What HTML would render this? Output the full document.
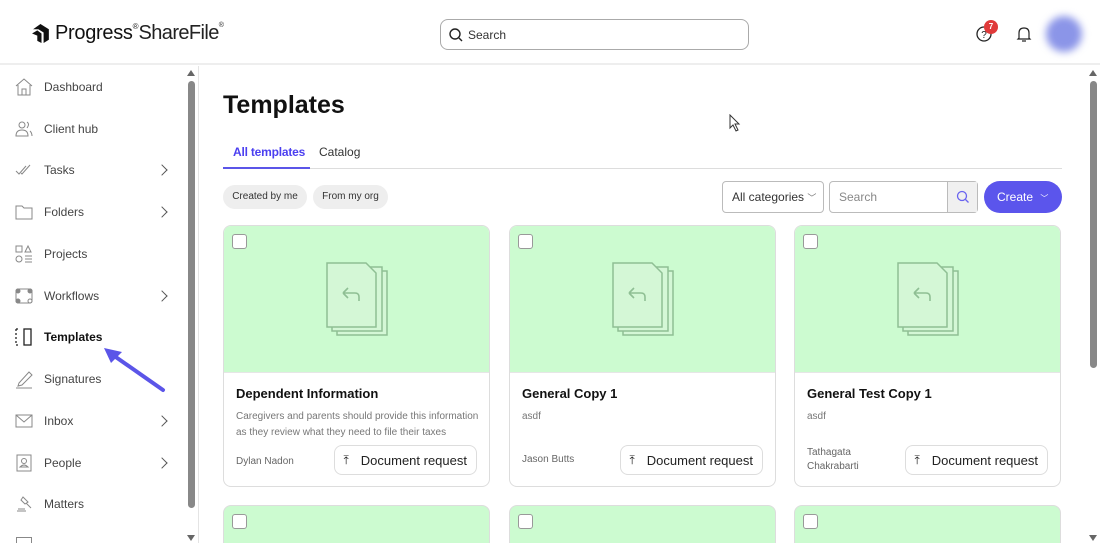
<!DOCTYPE html>
<html style="height:543px;overflow:hidden"><head><meta charset="utf-8"><style>
*{box-sizing:border-box;margin:0;padding:0}
html{width:1100px;height:543px;overflow:hidden}
body{width:1100px;height:543px;overflow:hidden;background:#fff;font-family:"Liberation Sans",sans-serif;color:#222;position:relative}
.abs{position:absolute}
.hdr{left:0;top:0;width:1100px;height:65px;border-bottom:2px solid #eee;background:#fff}
.nav{left:14px;width:170px;height:20px;display:flex;align-items:center;font-size:12px;color:#444}
.nav svg{width:20px;height:20px;margin-right:10px;flex:none}
.nav .ch{position:absolute;right:18px;top:6px;width:8px;height:8px;border-right:1.3px solid #555;border-top:1.3px solid #555;transform:rotate(45deg)}
.card{width:267px;height:262px;border:1px solid #ddd;border-radius:8px;overflow:hidden;background:#fff}
.card .img{height:147px;background:#ccfbd0;position:relative;border-bottom:1px solid #e6e6e6}
.part{height:38px;border-bottom:none;border-radius:8px 8px 0 0;background:#ccfbd0}
.cb{position:absolute;left:8px;top:8px;width:15px;height:15px;border:1px solid #999;border-radius:3px;background:#fff}
.card h3{position:absolute;left:12px;top:160px;font-size:13px;font-weight:bold;color:#111}
.desc{position:absolute;left:12px;top:183px;font-size:10px;color:#777;line-height:16px;width:250px}
.auth{position:absolute;left:12px;font-size:10px;color:#666;line-height:14px}
.btn{position:absolute;right:12px;top:219px;height:30px;border:1px solid #ddd;border-radius:8px;font-size:13px;color:#222;display:flex;align-items:center;padding:0 9px 0 8px}
.btn span{margin-right:12px;font-size:12px}
</style></head><body>
<div class="abs hdr"></div>
<div class="abs" style="left:31px;top:22px;display:flex;align-items:center">
<svg width="21" height="21" viewBox="0 0 20 20"><path d="M2 6 L9 1 L17 6 L17 16 L12 19 L12 9 L7 6 Z" fill="#111"/><path d="M1 10 L6 7 L10 10 L10 19 L6 17 L6 12 Z" fill="#111"/></svg>
<span style="font-size:20px;color:#111;margin-left:3px;letter-spacing:-0.3px">Progress</span><span style="font-size:8px;align-self:flex-start">®</span><span style="font-size:20px;color:#222;letter-spacing:-0.6px">ShareFile</span><span style="font-size:7px;align-self:flex-start">®</span>
</div>
<div class="abs" style="left:440px;top:19px;width:309px;height:31px;border:1px solid #aaa;border-radius:8px;display:flex;align-items:center;padding-left:8px;font-size:12px;color:#333">
<svg width="14" height="14" viewBox="0 0 14 14" style="margin-right:5px"><circle cx="6" cy="6" r="5" fill="none" stroke="#222" stroke-width="1.4"/><path d="M10 10 L13 13" stroke="#222" stroke-width="1.4"/></svg>Search</div>
<svg class="abs" style="left:976px;top:26px" width="16" height="16" viewBox="0 0 16 16"><circle cx="8" cy="8" r="7" fill="none" stroke="#222" stroke-width="1.3"/><text x="8" y="12" font-size="10" text-anchor="middle" font-family="Liberation Sans" fill="#222">?</text></svg>
<div class="abs" style="left:984px;top:20px;width:14px;height:14px;border-radius:50%;background:#e03a3a;color:#fff;font-size:8px;text-align:center;line-height:14px;font-weight:bold">7</div>
<svg class="abs" style="left:1016px;top:26px" width="16" height="17" viewBox="0 0 16 17"><path d="M3 12 L3 7 Q3 2 8 2 Q13 2 13 7 L13 12 L14 13 L2 13 Z" fill="none" stroke="#222" stroke-width="1.2"/><path d="M6 15 L10 15" stroke="#222" stroke-width="1.2"/></svg>
<div class="abs" style="left:1046px;top:16px;width:36px;height:36px;border-radius:50%;background:#8b95e8;filter:blur(4px)"></div>

<div class="abs" style="left:198px;top:66px;width:1px;height:477px;background:#e4e4e4"></div>
<div class="abs" style="left:187px;top:70px;width:0;height:0;border-left:4px solid transparent;border-right:4px solid transparent;border-bottom:6px solid #666"></div>
<div class="abs" style="left:188px;top:81px;width:7px;height:427px;background:#888;border-radius:4px"></div>
<div class="abs" style="left:187px;top:535px;width:0;height:0;border-left:4px solid transparent;border-right:4px solid transparent;border-top:6px solid #666"></div>

<div class="abs nav" style="top:77px"><svg viewBox="0 0 20 20" fill="none" stroke="#888" stroke-width="1"><path d="M2 9 L10 2 L18 9 M4 8 V18 H16 V8 M8 18 V12 H12 V18"/></svg>Dashboard</div>
<div class="abs nav" style="top:119px"><svg viewBox="0 0 20 20" fill="none" stroke="#888" stroke-width="1"><circle cx="8" cy="6" r="3"/><path d="M2 17 Q2 11 8 11 Q14 11 14 17 Z M13 3 Q16 5 13 9 M16 12 Q18 14 18 17"/></svg>Client hub</div>
<div class="abs nav" style="top:160px"><svg viewBox="0 0 20 20" fill="none" stroke="#888" stroke-width="1"><path d="M2 11 L5 14 L12 6 M7 13 L8 14 L16 5"/></svg>Tasks<i class="ch"></i></div>
<div class="abs nav" style="top:202px"><svg viewBox="0 0 20 20" fill="none" stroke="#888" stroke-width="1"><path d="M2 4 H8 L10 6 H18 V17 H2 Z"/></svg>Folders<i class="ch"></i></div>
<div class="abs nav" style="top:244px"><svg viewBox="0 0 20 20" fill="none" stroke="#888" stroke-width="1"><rect x="2" y="2" width="6" height="6"/><path d="M14 2 L17 8 H11 Z M11 12 H18 M11 15 H18 M11 18 H18"/><circle cx="5" cy="15" r="3"/></svg>Projects</div>
<div class="abs nav" style="top:286px"><svg viewBox="0 0 20 20" fill="none" stroke="#888" stroke-width="1"><rect x="2" y="3" width="16" height="14" rx="2"/><circle cx="4" cy="5" r="2" fill="#888"/><circle cx="16" cy="5" r="2" fill="#888"/><circle cx="4" cy="15" r="2" fill="#888"/><circle cx="16" cy="15" r="2"/></svg>Workflows<i class="ch"></i></div>
<div class="abs nav" style="top:327px;color:#111;font-weight:bold"><svg viewBox="0 0 20 20" fill="none" stroke="#222" stroke-width="1.3"><path d="M2 2 H6 M2 18 H6 M2 2 V18" stroke-dasharray="2 2"/><rect x="10" y="2" width="7" height="16"/></svg>Templates</div>
<div class="abs nav" style="top:369px"><svg viewBox="0 0 20 20" fill="none" stroke="#888" stroke-width="1"><path d="M5 14 L15 3 L18 6 L8 16 L4 17 Z M2 19 H18"/></svg>Signatures</div>
<div class="abs nav" style="top:411px"><svg viewBox="0 0 20 20" fill="none" stroke="#888" stroke-width="1"><rect x="2" y="4" width="16" height="12"/><path d="M2 4 L10 11 L18 4"/></svg>Inbox<i class="ch"></i></div>
<div class="abs nav" style="top:453px"><svg viewBox="0 0 20 20" fill="none" stroke="#888" stroke-width="1"><rect x="3" y="2" width="14" height="16"/><circle cx="10" cy="8" r="2.5"/><path d="M6 14 Q10 10 14 14 Z"/></svg>People<i class="ch"></i></div>
<div class="abs nav" style="top:494px"><svg viewBox="0 0 20 20" fill="none" stroke="#888" stroke-width="1"><path d="M9 3 L14 8 L11 10 L7 6 Z M12 9 L17 14 M3 17 H12 M4 15 H11"/></svg>Matters</div>
<div class="abs" style="left:16px;top:537px;width:16px;height:6px;border:1px solid #888;border-bottom:none"></div>
<svg class="abs" style="left:100px;top:345px" width="68" height="50" viewBox="0 0 68 50"><path d="M63 45 L10 8" stroke="#5b55e8" stroke-width="4" stroke-linecap="round"/><path d="M4 3 L22 7 L11 18 Z" fill="#5b55e8"/></svg>

<div class="abs" style="left:223px;top:91px;font-size:25px;font-weight:bold;color:#111">Templates</div>
<div class="abs" style="left:233px;top:145px;font-size:12px;font-weight:bold;color:#4b3ff0;letter-spacing:-0.2px">All templates</div>
<div class="abs" style="left:319px;top:145px;font-size:12px;color:#333">Catalog</div>
<div class="abs" style="left:223px;top:168px;width:839px;height:1px;background:#ddd"></div>
<div class="abs" style="left:223px;top:167px;width:87px;height:2px;background:#5b55e8"></div>
<div class="abs" style="left:223px;top:185px;width:84px;height:24px;border-radius:12px;background:#eee;font-size:10px;text-align:center;line-height:24px;color:#333">Created by me</div>
<div class="abs" style="left:313px;top:185px;width:75px;height:24px;border-radius:12px;background:#eee;font-size:10px;text-align:center;line-height:24px;color:#333">From my org</div>
<div class="abs" style="left:722px;top:181px;width:102px;height:32px;border:1px solid #bbb;border-radius:4px;font-size:12px;line-height:30px;padding-left:9px;color:#333">All categories <span style="font-size:9px;color:#777">﹀</span></div>
<div class="abs" style="left:829px;top:181px;width:149px;height:32px;border:1px solid #bbb;border-radius:4px;font-size:12px;line-height:30px;padding-left:9px;color:#888">Search</div>
<div class="abs" style="left:947px;top:182px;width:30px;height:30px;background:#f0f0f0;border-left:1px solid #bbb"><svg style="margin:8px" width="14" height="14" viewBox="0 0 14 14"><circle cx="6" cy="6" r="4.5" fill="none" stroke="#6a64f0" stroke-width="1.3"/><path d="M9.5 9.5 L12.5 12.5" stroke="#6a64f0" stroke-width="1.3"/></svg></div>
<div class="abs" style="left:984px;top:181px;width:78px;height:32px;border-radius:16px;background:#5b55ec;color:#fff;font-size:12px;line-height:32px;padding-left:13px">Create <span style="font-size:8px;margin-left:4px">﹀</span></div>

<svg class="abs" style="left:729px;top:114px" width="12" height="18" viewBox="0 0 12 18"><path d="M1 1 L1 14 L4 11 L7 17 L9 16 L6 10 L10 10 Z" fill="#fff" stroke="#333"/></svg>

<div class="abs card" style="left:223px;top:225px">
<div class="img"><i class="cb"></i><svg class="abs" style="left:101px;top:35px" width="64" height="76" viewBox="0 0 64 76"><g fill="#d4f7d6" stroke="#8fbf94" stroke-width="1.5"><rect x="12" y="10" width="50" height="64"/><rect x="7" y="6" width="50" height="64"/><path d="M2 2 H41 L51 12 V66 H2 Z"/></g><path d="M18 32 L23 27 M18 32 L23 37 M18 32 H30 Q34 32 34 36 V40" fill="none" stroke="#8fbf94" stroke-width="1.6"/></svg></div>
<h3>Dependent Information</h3>
<div class="desc">Caregivers and parents should provide this information as they review what they need to file their taxes</div>
<div class="auth" style="top:229px">Dylan Nadon</div>
<div class="btn"><span>⤒</span>Document request</div></div>

<div class="abs card" style="left:509px;top:225px">
<div class="img"><i class="cb"></i><svg class="abs" style="left:101px;top:35px" width="64" height="76" viewBox="0 0 64 76"><g fill="#d4f7d6" stroke="#8fbf94" stroke-width="1.5"><rect x="12" y="10" width="50" height="64"/><rect x="7" y="6" width="50" height="64"/><path d="M2 2 H41 L51 12 V66 H2 Z"/></g><path d="M18 32 L23 27 M18 32 L23 37 M18 32 H30 Q34 32 34 36 V40" fill="none" stroke="#8fbf94" stroke-width="1.6"/></svg></div>
<h3>General Copy 1</h3>
<div class="desc">asdf</div>
<div class="auth" style="top:227px">Jason Butts</div>
<div class="btn" style="top:219px"><span>⤒</span>Document request</div></div>

<div class="abs card" style="left:794px;top:225px">
<div class="img"><i class="cb"></i><svg class="abs" style="left:101px;top:35px" width="64" height="76" viewBox="0 0 64 76"><g fill="#d4f7d6" stroke="#8fbf94" stroke-width="1.5"><rect x="12" y="10" width="50" height="64"/><rect x="7" y="6" width="50" height="64"/><path d="M2 2 H41 L51 12 V66 H2 Z"/></g><path d="M18 32 L23 27 M18 32 L23 37 M18 32 H30 Q34 32 34 36 V40" fill="none" stroke="#8fbf94" stroke-width="1.6"/></svg></div>
<h3>General Test Copy 1</h3>
<div class="desc">asdf</div>
<div class="auth" style="top:220px">Tathagata<br>Chakrabarti</div>
<div class="btn"><span>⤒</span>Document request</div></div>

<div class="abs card part" style="left:223px;top:505px"><i class="cb"></i></div>
<div class="abs card part" style="left:509px;top:505px"><i class="cb"></i></div>
<div class="abs card part" style="left:794px;top:505px"><i class="cb"></i></div>

<div class="abs" style="left:1089px;top:70px;width:0;height:0;border-left:4px solid transparent;border-right:4px solid transparent;border-bottom:6px solid #666"></div>
<div class="abs" style="left:1090px;top:81px;width:7px;height:287px;background:#888;border-radius:4px"></div>
<div class="abs" style="left:1089px;top:535px;width:0;height:0;border-left:4px solid transparent;border-right:4px solid transparent;border-top:6px solid #666"></div>
</body></html>
